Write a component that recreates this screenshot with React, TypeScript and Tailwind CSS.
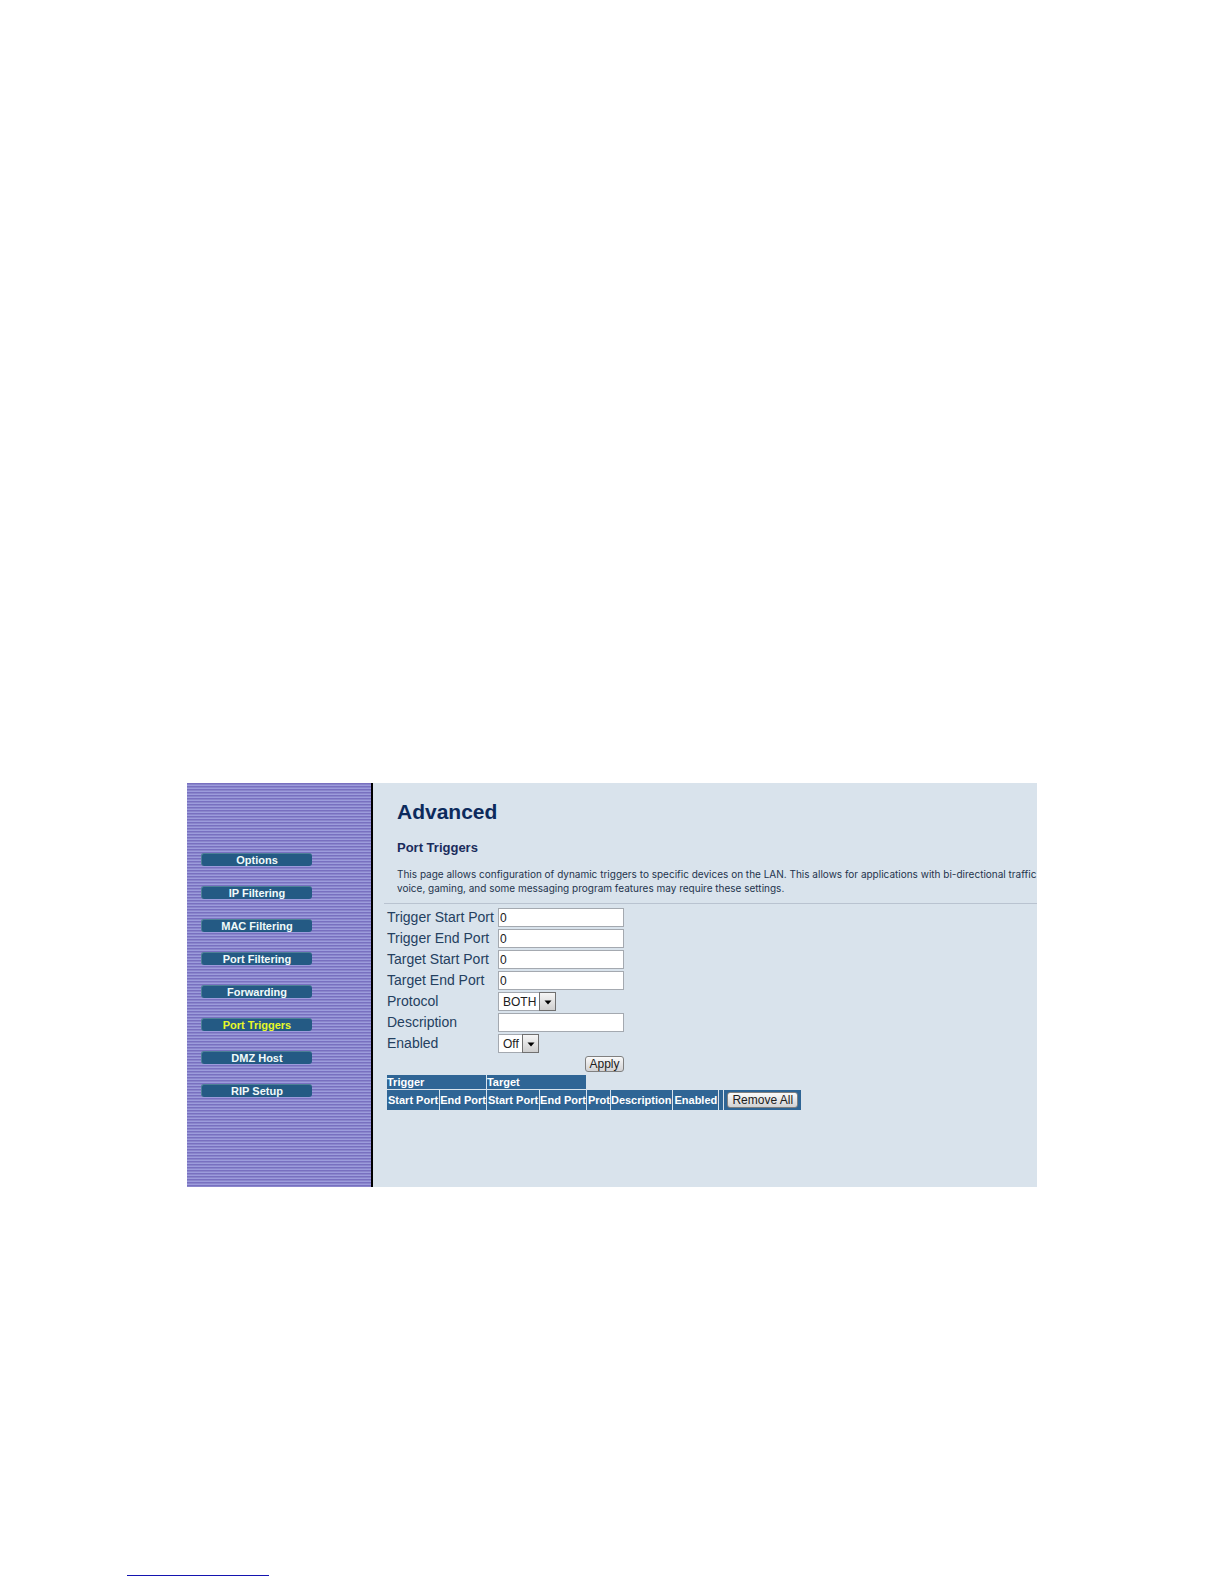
import React from "react";

const NAV = [
  "Options",
  "IP Filtering",
  "MAC Filtering",
  "Port Filtering",
  "Forwarding",
  "Port Triggers",
  "DMZ Host",
  "RIP Setup",
];

function Sidebar() {
  return (
    <nav className="flex w-[186px] shrink-0 flex-col gap-5 border-r-2 border-black bg-[repeating-linear-gradient(to_bottom,#7870c0_0px,#7870c0_1px,#8a86cb_1px,#8a86cb_2px,#9c9cdc_2px,#9c9cdc_3px)] pt-[70px] pl-3.5">
      {NAV.map((item) => (
        <a
          key={item}
          href="#"
          className={
            "flex h-[13px] w-[111px] items-center justify-center rounded-[3px] border-t border-l border-[#4c8096] bg-[#245a84] text-[11px] leading-[11px] font-bold whitespace-nowrap " +
            (item === "Port Triggers" ? "text-[#e8f828]" : "text-[#f0fafa]")
          }
        >
          {item}
        </a>
      ))}
    </nav>
  );
}

function Field({ id, label, children }: { id: string; label: string; children: React.ReactNode }) {
  return (
    <>
      <label htmlFor={id} className="text-[14px] leading-[19px] whitespace-nowrap">
        {label}
      </label>
      <div className="flex">{children}</div>
    </>
  );
}

function TextBox({ id, value }: { id: string; value: string }) {
  return (
    <input
      id={id}
      type="text"
      defaultValue={value}
      className="h-[19px] w-[126px] border border-[#a4a9b0] bg-white px-px text-[12px] leading-[16px] text-[#202020] outline-none"
    />
  );
}

function Select({ id, options, wide }: { id: string; options: string[]; wide?: boolean }) {
  return (
    <div className={"relative h-[19px] " + (wide ? "w-[58px]" : "w-[41px]")}>
      <select
        id={id}
        className="block h-full w-full appearance-none border border-[#a4a9b0] bg-white pl-1 text-[12px] leading-[16px] text-[#202020] outline-none"
      >
        {options.map((o) => (
          <option key={o}>{o}</option>
        ))}
      </select>
      <span className="pointer-events-none absolute inset-y-0 right-0 flex w-[17px] items-center justify-center border border-[#707070] bg-linear-to-b from-[#f6f6f6] to-[#cfcfcf]">
        <svg width="8" height="5" viewBox="0 0 8 5" className="mt-0.5">
          <path d="M0.5 0.5h7L4 4.5z" fill="#000" />
        </svg>
      </span>
    </div>
  );
}

const BUTTON =
  "rounded-[3px] border border-[#808080] bg-linear-to-b from-[#fafafa] to-[#d2d2d4] text-[12px] leading-[14px] text-[#202020]";

const CELL = "bg-[#2f6595] py-0 text-left align-middle font-bold whitespace-nowrap";

export default function App() {
  return (
    <div className="flex min-h-screen flex-col bg-white font-['Liberation_Sans',Arial,sans-serif]">
      <div className="mx-[187px] mt-[783px] flex overflow-hidden">
        <Sidebar />
        <main className="min-w-0 flex-1 overflow-hidden bg-[#d9e3ec] pb-[76px] text-[#24405f]">
          <header className="ml-[11px] border-b border-[#b9c3d0] pt-[17px] pb-2 pl-[13px] whitespace-nowrap">
            <h1 className="text-[21px] leading-6 font-bold text-[#0c2a5c]">Advanced</h1>
            <h2 className="mt-4 text-[13px] leading-4 font-bold text-[#1a2c5c]">Port Triggers</h2>
            <p className="mt-[11px] font-[Inter,sans-serif] text-[10px] leading-[14px] text-[#24344c]">
              This page allows configuration of dynamic triggers to specific devices on the LAN. This allows for
              applications with bi-directional traffic
              <br />
              voice, gaming, and some messaging program features may require these settings.
            </p>
          </header>

          <form className="mt-1 ml-3.5 w-[237px]" onSubmit={(e) => e.preventDefault()}>
            <div className="grid grid-cols-[111px_126px] gap-y-0.5">
              <Field id="trigger-start" label="Trigger Start Port">
                <TextBox id="trigger-start" value="0" />
              </Field>
              <Field id="trigger-end" label="Trigger End Port">
                <TextBox id="trigger-end" value="0" />
              </Field>
              <Field id="target-start" label="Target Start Port">
                <TextBox id="target-start" value="0" />
              </Field>
              <Field id="target-end" label="Target End Port">
                <TextBox id="target-end" value="0" />
              </Field>
              <Field id="protocol" label="Protocol">
                <Select id="protocol" options={["BOTH", "TCP", "UDP"]} wide />
              </Field>
              <Field id="description" label="Description">
                <TextBox id="description" value="" />
              </Field>
              <Field id="enabled" label="Enabled">
                <Select id="enabled" options={["Off", "On"]} />
              </Field>
            </div>
            <div className="mt-[3px] flex justify-end">
              <button type="submit" className={BUTTON + " h-4 w-[39px]"}>
                Apply
              </button>
            </div>
          </form>

          <table className="mt-0.5 ml-[13px] border-separate border-spacing-px text-[11px] leading-[14px] text-white">
            <thead>
              <tr>
                <th colSpan={2} className={CELL + " px-0"}>Trigger</th>
                <th colSpan={2} className={CELL + " px-0"}>Target</th>
              </tr>
              <tr className="h-5">
                <th className={CELL + " px-px"}>Start Port</th>
                <th className={CELL + " px-0"}>End Port</th>
                <th className={CELL + " px-px"}>Start Port</th>
                <th className={CELL + " px-0"}>End Port</th>
                <th className={CELL + " pr-0 pl-px"}>Prot</th>
                <th className={CELL + " pr-px pl-0"}>Description</th>
                <th className={CELL + " px-px"}>Enabled</th>
                <th className="w-1 bg-[#2f6595] p-0" />
                <th className="bg-[#2f6595] px-[3px] py-0 align-middle">
                  <button type="button" className={BUTTON + " block h-4 w-[71px] font-normal whitespace-nowrap"}>
                    Remove All
                  </button>
                </th>
              </tr>
            </thead>
          </table>
        </main>
      </div>
      <div className="mt-auto mb-2 ml-[127px] h-px w-[142px] bg-[#1414b0]" />
    </div>
  );
}
